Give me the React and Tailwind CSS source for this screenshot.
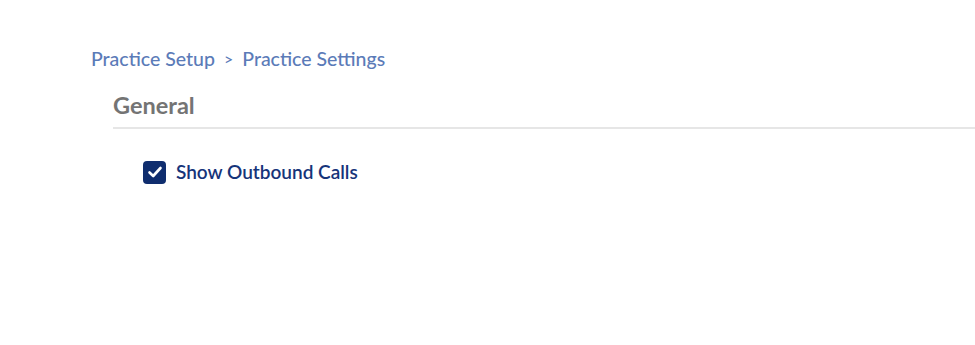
export default function App() {
  return (
    <div className="min-h-screen bg-white font-['Lato','Noto_Sans',sans-serif]">
      <div className="pt-[46px] pl-[91px]">
        <nav className="flex items-center text-[19.5px] font-medium text-[#5b7bb8] leading-[26px]">
          <span>Practice Setup</span>
          <span className="mx-[9px] text-[16px]">&gt;</span>
          <span>Practice Settings</span>
        </nav>
      </div>
      <div className="pl-[113px] mt-[20px]">
        <h2 className="text-[23.5px] font-bold text-[#747474] leading-[26px] pb-[9px] border-b-2 border-[#e6e6e6]">
          General
        </h2>
        <label className="flex items-center gap-[10px] mt-[31px] ml-[30px]">
          <span className="w-[23px] h-[23px] rounded-[4px] bg-[#0f2d6e] flex items-center justify-center">
            <svg width="16" height="16" viewBox="0 0 16 16" fill="none">
              <path d="M2.5 8.5 L6.2 12 L13.5 4" stroke="white" strokeWidth="2.6" strokeLinecap="round" strokeLinejoin="round" />
            </svg>
          </span>
          <span className="text-[19px] font-semibold text-[#16347a] leading-[24px]">Show Outbound Calls</span>
        </label>
      </div>
    </div>
  );
}
